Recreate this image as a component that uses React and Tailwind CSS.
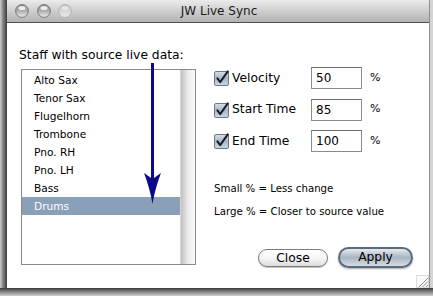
import React from 'react';

const staff = ['Alto Sax', 'Tenor Sax', 'Flugelhorn', 'Trombone', 'Pno. RH', 'Pno. LH', 'Bass', 'Drums'];

const options = [
  { label: 'Velocity', value: '50' },
  { label: 'Start Time', value: '85' },
  { label: 'End Time', value: '100' },
];

function Light({ dim }) {
  const id = dim ? 'lg-dim' : 'lg-on';
  return (
    <svg width="14" height="14" viewBox="0 0 14 14">
      <defs>
        <linearGradient id={id} x1="0" y1="0" x2="0" y2="1">
          <stop offset="0" stopColor={dim ? '#c4c4c4' : '#8c8c8c'} />
          <stop offset="0.55" stopColor={dim ? '#d8d8d8' : '#b4b4b4'} />
          <stop offset="1" stopColor={dim ? '#ececec' : '#f0f0f0'} />
        </linearGradient>
      </defs>
      <circle cx="7" cy="7" r="6.4" fill={`url(#${id})`} stroke={dim ? '#b0b0b0' : '#6e6e6e'} strokeWidth="0.9" />
      <ellipse cx="7" cy="4" rx="3.6" ry="2" fill="#fff" opacity={dim ? 0.45 : 0.8} />
    </svg>
  );
}

function CheckBox() {
  return (
    <svg width="17" height="16" viewBox="0 0 17 16" className="shrink-0">
      <defs>
        <linearGradient id="cb" x1="0" y1="0" x2="0" y2="1">
          <stop offset="0" stopColor="#d6dee8" />
          <stop offset="0.5" stopColor="#a9b6c6" />
          <stop offset="1" stopColor="#cfd8e2" />
        </linearGradient>
      </defs>
      <rect x="0.5" y="1.5" width="14" height="14" rx="1.5" fill="url(#cb)" stroke="#6d7886" />
      <path d="M3.4 8.4 L6.2 12.2 L13.8 1.4" fill="none" stroke="#1a1a2a" strokeWidth="2" strokeLinejoin="round" strokeLinecap="round" />
    </svg>
  );
}

export default function App() {
  return (
    <div
      className="relative w-[433px] h-[296px] flex flex-col overflow-hidden bg-[#c8c8c8] text-black"
      style={{ fontFamily: '"DejaVu Sans", "Liberation Sans", sans-serif' }}
    >
      <div className="flex h-[288px]">
        <div className="w-[7px] bg-linear-to-r from-[#cfcfcf] via-[#7a7a7a] to-[#3c3c3c]" />

        <div className="relative flex-1 flex flex-col bg-white border-r border-[#8e8e8e]">
          {/* title bar */}
          <div className="relative h-[23px] flex items-center bg-linear-to-b from-[#ebebeb] to-[#b3b3b3] border-b border-[#505050]">
            <div className="flex items-center gap-[7.5px] pl-[8px]">
              <Light />
              <Light />
              <Light dim />
            </div>
            <div className="absolute inset-0 flex items-center justify-center text-[12px] text-[#1a1a1a] pl-[2px]">
              JW Live Sync
            </div>
          </div>

          {/* body */}
          <div className="flex flex-1">
            <div className="pl-[12px] w-[189px]">
              <div className="mt-[24px] h-[16px] leading-[16px] text-[12.3px] whitespace-nowrap">
                Staff with source live data:
              </div>
              <div className="mt-[6px] ml-[2px] w-[175px] h-[196px] border border-[#8a8a8a] flex">
                <div className="flex-1 pt-[1px]">
                  {staff.map(s => (
                    <div
                      key={s}
                      className={
                        'h-[18px] leading-[18px] pl-[12px] text-[10.6px] ' +
                        (s === 'Drums' ? 'bg-[#8aa0b9] text-white' : '')
                      }
                    >
                      {s}
                    </div>
                  ))}
                </div>
                <div className="w-[15px] bg-linear-to-r from-[#c2c2c2] via-[#ececec] to-[#fafafa] border-l border-[#d6d6d6]" />
              </div>
            </div>

            <div className="flex-1 pl-[18px] pr-[16px]">
              <div className="mt-[44px] flex flex-col gap-[9.5px]">
                {options.map(o => (
                  <div key={o.label} className="h-[22px] flex items-center">
                    <CheckBox />
                    <span className="ml-[1px] w-[79px] text-[12.3px]">{o.label}</span>
                    <div className="w-[51px] h-[22px] border border-[#8c8c8c] border-t-[#6a6a6a] pl-[4px] leading-[20px] text-[12px]">
                      {o.value}
                    </div>
                    <span className="ml-[8px] text-[11px]">%</span>
                  </div>
                ))}
              </div>

              <div className="mt-[30px] text-[10.2px] leading-[14px]">Small % = Less change</div>
              <div className="mt-[9px] text-[10.2px] leading-[14px]">Large % = Closer to source value</div>

              <div className="mt-[28px] flex justify-end items-center gap-[10px]">
                <button className="w-[70px] h-[18px] rounded-full border border-[#7c7c7c] bg-linear-to-b from-white via-[#f6f6f6] to-[#dcdcdc] text-[12.3px] leading-[16px] shadow-[0_1px_1px_rgba(0,0,0,0.25)]">
                  Close
                </button>
                <button className="w-[75px] h-[21px] rounded-full border-2 border-[#5c6b7b] bg-linear-to-b from-[#e6ebf0] via-[#a8b4c2] to-[#d6dde6] text-[12.3px] leading-[17px] shadow-[0_1px_2px_rgba(0,0,0,0.35)]">
                  Apply
                </button>
              </div>
            </div>
          </div>

          {/* resize grip */}
          <svg className="absolute right-0 bottom-0" width="13" height="13" viewBox="0 0 13 13">
            <rect x="0.5" y="0.5" width="12" height="12" fill="#fafafa" stroke="#dcdcdc" />
            <path d="M12 3 L3 12 M12 6.5 L6.5 12 M12 10 L10 12" stroke="#8a8a8a" strokeWidth="1" />
          </svg>
        </div>

        <div className="w-[3px] bg-[#d4d4d4]" />
      </div>
      <div className="h-[8px] bg-linear-to-b from-[#3a3a3a] via-[#8a8a8a] to-[#d0d0d0]" />

      {/* annotation arrow */}
      <svg className="absolute left-0 top-0 pointer-events-none" width="433" height="296" viewBox="0 0 433 296">
        <rect x="151" y="63" width="3" height="120" fill="#0a0a88" />
        <path d="M152.5 204 C150.5 192 147.5 182 144 173 L152.5 179 L161 173 C157.5 182 154.5 192 152.5 204 Z" fill="#0a0a88" />
      </svg>
    </div>
  );
}
